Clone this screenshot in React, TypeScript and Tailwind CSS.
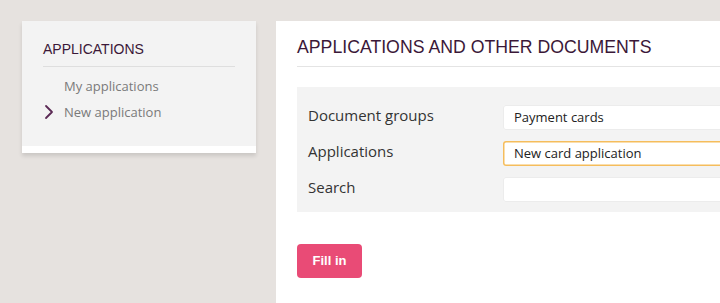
import { ChevronRight } from "lucide-react";

const fields = [
  { label: "Document groups", value: "Payment cards", active: false },
  { label: "Applications", value: "New card application", active: true },
  { label: "Search", value: "", active: false },
];

const inputBase =
  "-mr-[20px] flex h-[25px] flex-1 items-center rounded-[3px] bg-white pl-[11px] text-[13px] text-[#222] font-['Open_Sans',sans-serif]";

export default function App() {
  return (
    <div className="flex h-[303px] w-[720px] overflow-hidden bg-[#e6e2df] pt-[21px] pl-[22px] font-['Liberation_Sans',sans-serif]">
      <aside className="w-[234px] shrink-0 self-start bg-white pb-[7px] shadow-[0_3px_4px_rgba(0,0,0,0.12)]">
        <div className="bg-[#f3f3f3] px-[21px] pt-[20px] pb-[26px]">
          <h2 className="border-b border-[#dedede] pb-[8px] text-[14px] leading-[17px] text-[#3b1838]">
            APPLICATIONS
          </h2>
          <ul className="mt-[11px] space-y-[10px] text-[13px] leading-[16px] text-[#7a7a7a] font-['Open_Sans',sans-serif]">
            <li className="pl-[21px]">My applications</li>
            <li className="relative pl-[21px]">
              <ChevronRight className="absolute left-[-6px] top-[-4px] h-[24px] w-[24px] text-[#5b2a55]" strokeWidth={1.8} />
              New application
            </li>
          </ul>
        </div>
      </aside>

      <main className="ml-[20px] min-w-0 flex-1 overflow-hidden bg-white pl-[21px]">
        <h1 className="mt-[17px] border-b border-[#e4e4e4] pb-[9px] text-[17.7px] leading-[19px] whitespace-nowrap text-[#3b1838]">
          APPLICATIONS AND OTHER DOCUMENTS
        </h1>

        <div className="mt-[20px] space-y-[11px] bg-[#f3f3f3] pt-[18px] pb-[10px] pl-[11px]">
          {fields.map((f) => (
            <div key={f.label} className="flex items-center">
              <label className="w-[195px] shrink-0 -translate-y-[2px] text-[15px] text-[#333] font-['Open_Sans',sans-serif]">
                {f.label}
              </label>
              <div
                className={
                  f.active
                    ? inputBase + " shadow-[inset_0_0_0_1.5px_#f5bd5c]"
                    : inputBase + " shadow-[inset_0_0_0_1px_#ececec]"
                }
              >
                {f.value}
              </div>
            </div>
          ))}
        </div>

        <button className="mt-[32px] h-[34px] w-[65px] rounded-[4px] bg-[#e94b76] text-[13px] font-bold text-white">
          Fill in
        </button>
      </main>
    </div>
  );
}
